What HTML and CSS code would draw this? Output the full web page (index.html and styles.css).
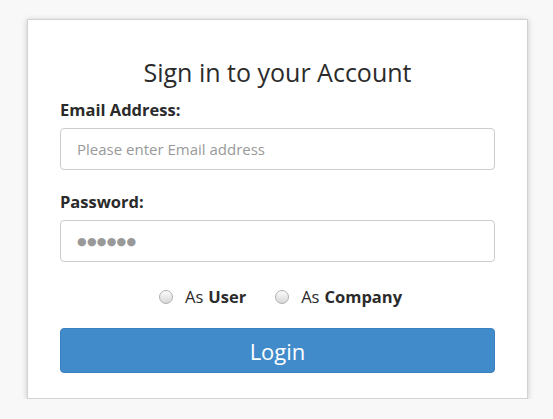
FILE: index.html
```html
<!DOCTYPE html>
<html>
<head>
<meta charset="utf-8">
<link rel="stylesheet" href="styles.css">
</head>
<body>
<div class="card">
  <h1 class="title">Sign in to your Account</h1>
  <label class="label" for="email">Email Address:</label>
  <input class="field" id="email" type="text" placeholder="Please enter Email address">
  <label class="label label-pw" for="pw">Password:</label>
  <div class="field pw"><span class="dots">●●●●●●</span></div>
  <div class="roles">
    <label class="role"><span class="radio"></span>As <b>User</b></label>
    <label class="role"><span class="radio"></span>As <b>Company</b></label>
  </div>
  <button class="login">Login</button>
</div>
</body>
</html>
```

FILE: styles.css
```css
html, body {
  margin: 0;
  padding: 0;
  background: #f8f8f8;
  font-family: "Open Sans", "Noto Sans", sans-serif;
  color: #333;
}
body {
  padding: 19px 0 0 27px;
}
.card {
  width: 435px;
  background: #fff;
  border: 1px solid #d2d2d2;
  box-shadow: 0 1px 6px rgba(0,0,0,0.2);
  padding: 36px 32px 25px;
  display: flex;
  flex-direction: column;
}
.title {
  margin: 0;
  font-size: 25px;
  line-height: 32px;
  font-weight: 400;
  text-align: center;
  color: #2b2b2b;
}
.label {
  display: block;
  margin-top: 10px;
  font-size: 16.5px;
  line-height: 24px;
  font-weight: 700;
  color: #2b2b2b;
}
.label-pw {
  margin-top: 20px;
}
.field {
  box-sizing: border-box;
  margin-top: 6px;
  height: 42px;
  width: 100%;
  border: 1px solid #ccc;
  border-radius: 4px;
  padding: 0 16px;
  font-family: inherit;
  font-size: 15px;
  color: #555;
  background: #fff;
  outline: none;
}
.field::placeholder {
  color: #999;
}
.pw {
  display: flex;
  align-items: center;
}
.dots {
  color: #999;
  font-size: 11px;
  letter-spacing: 0.3px;
  font-family: "DejaVu Sans", sans-serif;
}
.roles {
  margin-top: 23px;
  display: flex;
  justify-content: center;
  gap: 29px;
  font-size: 16.5px;
  line-height: 24px;
  padding-left: 6px;
  color: #2b2b2b;
}
.role {
  display: flex;
  align-items: center;
}
.role b {
  margin-left: 5px;
}
.radio {
  width: 14px;
  height: 14px;
  box-sizing: border-box;
  border-radius: 50%;
  border: 1px solid #b0b0b0;
  background: linear-gradient(#fbfbfb, #d8d8d8);
  margin-right: 12px;
}
.login {
  margin-top: 19px;
  height: 45px;
  width: 100%;
  border: 1px solid #3a7fc0;
  border-radius: 4px;
  background: #428bca;
  color: #fff;
  font-family: inherit;
  font-size: 22px;
  cursor: pointer;
}
```
